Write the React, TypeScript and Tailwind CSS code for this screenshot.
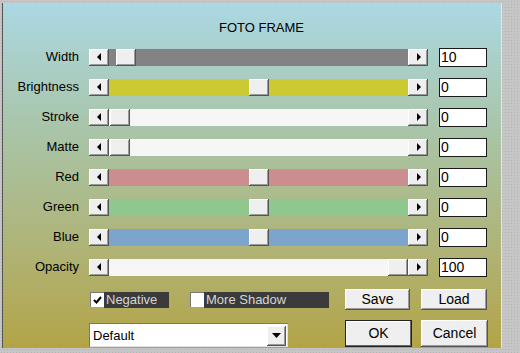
import React from "react";

type Row = {
  label: string;
  track: string;
  thumb: number;
  value: string;
};

const rows: Row[] = [
  { label: "Width", track: "bg-[#838383]", thumb: 7, value: "10" },
  { label: "Brightness", track: "bg-[#cbca32]", thumb: 140, value: "0" },
  { label: "Stroke", track: "bg-[#f6f6f6]", thumb: 1, value: "0" },
  { label: "Matte", track: "bg-[#f6f6f6]", thumb: 1, value: "0" },
  { label: "Red", track: "bg-[#cc8d8e]", thumb: 140, value: "0" },
  { label: "Green", track: "bg-[#8fc88f]", thumb: 140, value: "0" },
  { label: "Blue", track: "bg-[#7ba5cd]", thumb: 140, value: "0" },
  { label: "Opacity", track: "bg-[#f6f6f6]", thumb: 279, value: "100" },
];

const bevel =
  "bg-[#efefef] shadow-[inset_-1px_-1px_#555,inset_1px_1px_#fff,inset_-2px_-2px_#9a9a9a]";

function ArrowBtn({ dir }: { dir: "left" | "right" }) {
  return (
    <div className={`flex h-[17px] w-[20px] shrink-0 items-center justify-center ${bevel}`}>
      {dir === "left" ? (
        <svg width="5" height="8" viewBox="0 0 5 8">
          <path d="M4 0 L0 4 L4 8 Z" fill="#000" />
        </svg>
      ) : (
        <svg width="5" height="8" viewBox="0 0 5 8">
          <path d="M1 0 L5 4 L1 8 Z" fill="#000" />
        </svg>
      )}
    </div>
  );
}

function Slider({ track, thumb }: { track: string; thumb: number }) {
  return (
    <div className="flex h-[17px] w-[339px]">
      <ArrowBtn dir="left" />
      <div className={`relative h-[17px] w-[299px] ${track}`}>
        <div className={`absolute top-0 h-[17px] w-[20px] ${bevel}`} style={{ left: thumb }} />
      </div>
      <ArrowBtn dir="right" />
    </div>
  );
}

function Check({ checked, label, width }: { checked: boolean; label: string; width: string }) {
  return (
    <div className="flex h-[16px] items-center">
      <div className="flex h-[15px] w-[14px] items-center justify-center border-l border-t border-[#777] bg-white">
        {checked && (
          <svg width="9" height="8" viewBox="0 0 9 8">
            <path d="M1 4 L3.5 6.5 L8 1" stroke="#000" strokeWidth="2" fill="none" />
          </svg>
        )}
      </div>
      <div className={`flex h-[16px] items-center bg-[#3b3b3b] pl-[2px] text-[13px] text-[#d6d6d6] ${width}`}>
        {label}
      </div>
    </div>
  );
}

function Button({ label, w, h, primary }: { label: string; w: string; h: string; primary?: boolean }) {
  return (
    <div
      className={`flex items-center justify-center text-[14px] text-black ${w} ${h} ${
        primary
          ? "border border-[#222] bg-[#efefef] shadow-[inset_-1px_-1px_#666,inset_1px_1px_#fff]"
          : bevel
      }`}
    >
      {label}
    </div>
  );
}

export default function App() {
  return (
    <div
      className="h-[353px] w-[520px] overflow-hidden bg-[#c6c6c6] bg-[radial-gradient(#b4b4b4_1px,transparent_1px)] bg-[size:3px_3px] pt-[3px] pl-[2px]"
      style={{ fontFamily: '"Liberation Sans", Arial, sans-serif' }}
    >
      <div className="h-[345px] w-[500px] border-l border-r border-l-[#555] border-r-[#e8e8e8] bg-gradient-to-b from-[#abd8e3] via-[#a9c3a3] via-40% to-[#b3a445]">
        <div className="flex h-[39px] items-center pl-[216px] pt-[10px] text-[13px] text-black">FOTO FRAME</div>

        {rows.map((r) => (
          <div key={r.label} className="flex h-[30px] items-center">
            <div className="w-[76px] shrink-0 text-right text-[13px] text-black">{r.label}</div>
            <div className="ml-[10px]">
              <Slider track={r.track} thumb={r.thumb} />
            </div>
            <div className="ml-[11px] flex h-[19px] w-[48px] items-center border border-[#1a1a1a] bg-white pl-[1px] text-[14px] leading-none text-black">
              {r.value}
            </div>
          </div>
        ))}

        <div className="mt-[7px] flex h-[21px] items-center">
          <div className="ml-[87px]">
            <Check checked label="Negative" width="w-[65px]" />
          </div>
          <div className="ml-[21px]">
            <Check checked={false} label="More Shadow" width="w-[125px]" />
          </div>
          <div className="ml-[16px]">
            <Button label="Save" w="w-[65px]" h="h-[21px]" />
          </div>
          <div className="ml-[11px]">
            <Button label="Load" w="w-[66px]" h="h-[21px]" />
          </div>
        </div>

        <div className="mt-[9px] flex h-[28px] items-center">
          <div className="ml-[86px] flex h-[24px] w-[199px] self-end items-center justify-between border-l border-t border-[#777] bg-white pr-[2px] shadow-[inset_-1px_-1px_#e0e0e0]">
            <span className="pl-[3px] text-[13px] text-black">Default</span>
            <div className={`flex h-[20px] w-[19px] items-center justify-center ${bevel}`}>
              <svg width="9" height="5" viewBox="0 0 9 5">
                <path d="M0 0 L9 0 L4.5 5 Z" fill="#000" />
              </svg>
            </div>
          </div>
          <div className="ml-[57px]">
            <Button label="OK" w="w-[67px]" h="h-[27px]" primary />
          </div>
          <div className="ml-[9px]">
            <Button label="Cancel" w="w-[67px]" h="h-[27px]" />
          </div>
        </div>
      </div>
    </div>
  );
}
